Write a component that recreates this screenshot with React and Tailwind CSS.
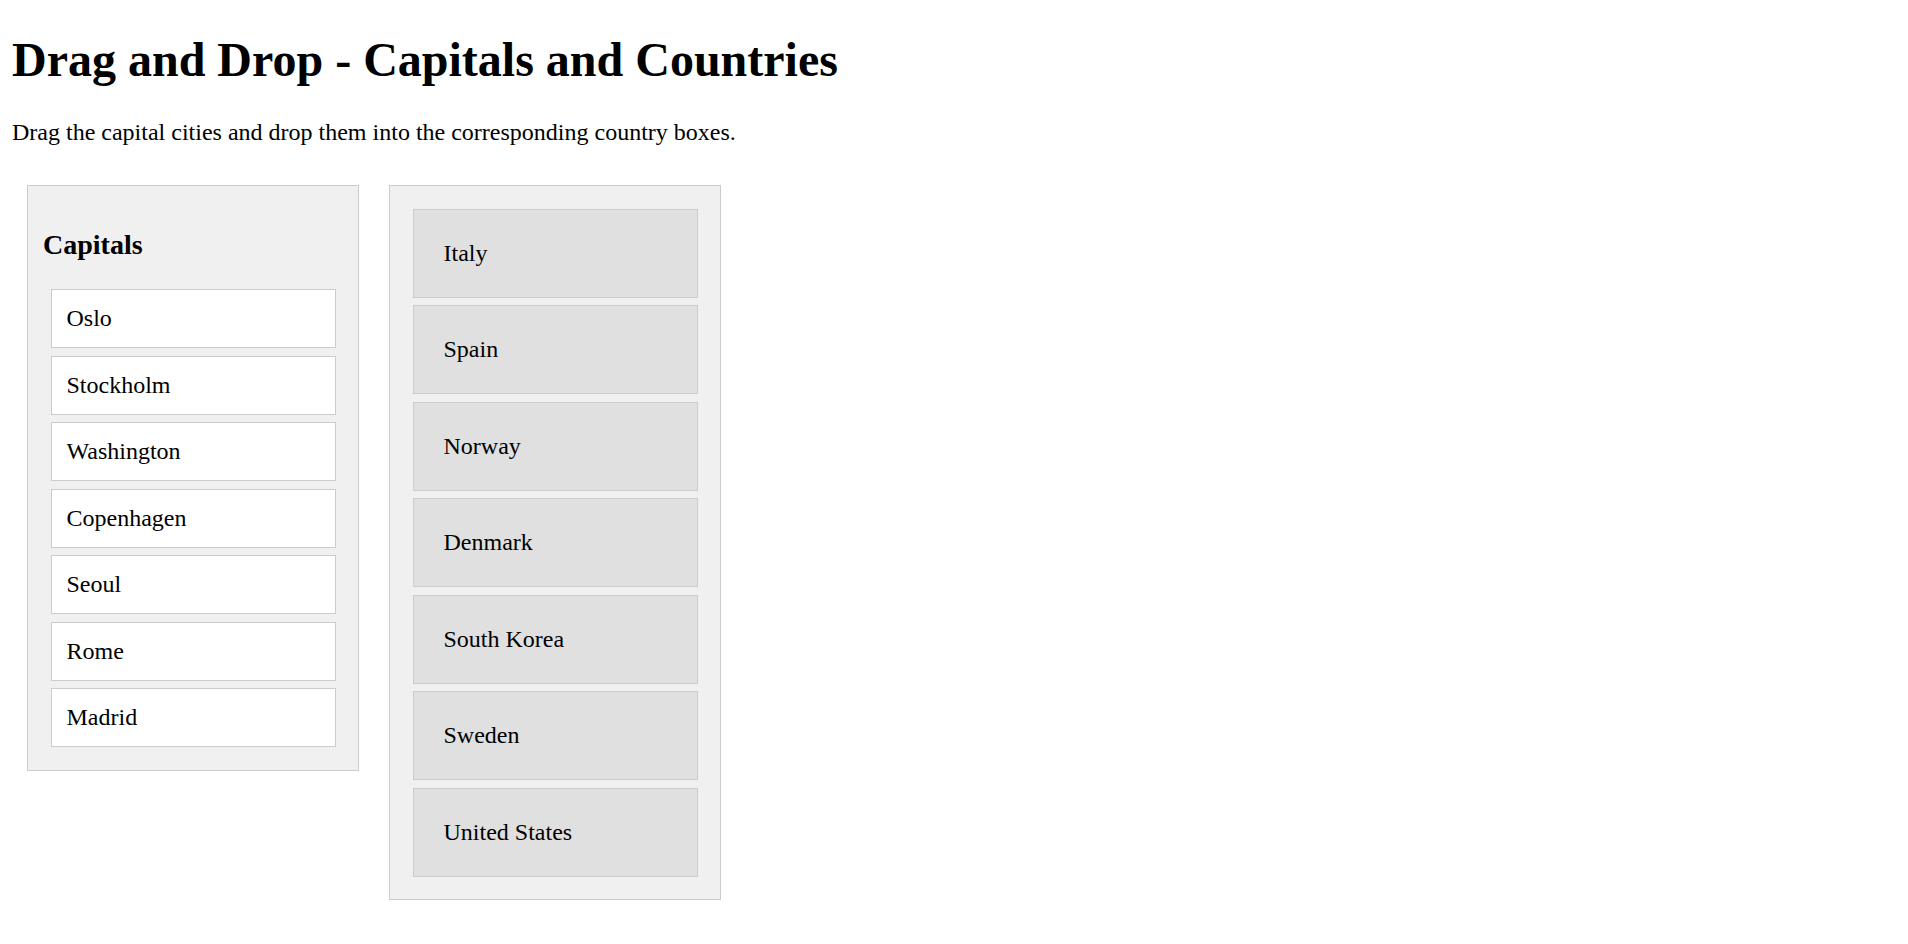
import { useState } from 'react';

const initialCapitals = ['Oslo', 'Stockholm', 'Washington', 'Copenhagen', 'Seoul', 'Rome', 'Madrid'];
const countries = ['Italy', 'Spain', 'Norway', 'Denmark', 'South Korea', 'Sweden', 'United States'];

const App = () => {
  const [capitals, setCapitals] = useState(initialCapitals);
  const [dropped, setDropped] = useState({});

  const handleDrop = (e, country) => {
    e.preventDefault();
    const city = e.dataTransfer.getData('text/plain');
    if (!city) return;
    setDropped(d => ({ ...d, [country]: city }));
    setCapitals(c => c.filter(x => x !== city));
  };

  return (
    <div className="px-[12px] font-['Liberation_Serif','Times_New_Roman',serif] text-black bg-white min-h-screen">
      <h1 className="text-[48px] font-bold leading-[normal] pt-[32px] mb-[32px]">
        Drag and Drop - Capitals and Countries
      </h1>
      <p className="text-[24px] leading-[normal] mb-[24px]">
        Drag the capital cities and drop them into the corresponding country boxes.
      </p>

      <div className="flex items-start">
        <div className="m-[15px] w-[332px] border border-[#cccccc] bg-[#f0f0f0] p-[15px]">
          <h3 className="text-[28px] font-bold leading-[normal] mt-[28px] mb-[28px]">Capitals</h3>
          {capitals.map(city => (
            <div
              key={city}
              draggable
              onDragStart={(e) => e.dataTransfer.setData('text/plain', city)}
              className="mx-[7.5px] mt-[7.5px] first-of-type:mt-0 bg-white border border-[#cccccc] p-[15px] text-[24px] leading-[normal] cursor-move"
            >
              {city}
            </div>
          ))}
          <div className="h-[7.5px]" />
        </div>

        <div className="m-[15px] w-[332px] border border-[#cccccc] bg-[#f0f0f0] p-[15px]">
          <div className="flex flex-col gap-[7.5px] p-[7.5px]">
            {countries.map(country => (
              <div
                key={country}
                onDragOver={(e) => e.preventDefault()}
                onDrop={(e) => handleDrop(e, country)}
                className="bg-[#e0e0e0] border border-[#cccccc] px-[30px] py-[30px] text-[24px] leading-[normal]"
              >
                {country}
                {dropped[country] && <span> - {dropped[country]}</span>}
              </div>
            ))}
          </div>
        </div>
      </div>
    </div>
  );
};

export default App;
